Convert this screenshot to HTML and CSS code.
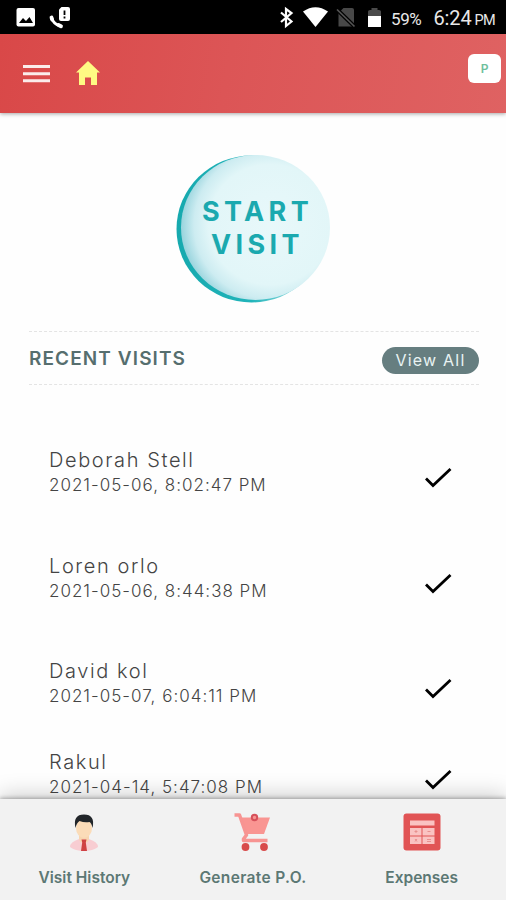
FILE: index.html
```html
<!DOCTYPE html>
<html lang="en">
<head>
    <meta charset="UTF-8">
    <title>Visits</title>
    <link rel="stylesheet" href="styles.css">
</head>
<body>
    <div class="status-bar">
        <svg class="status-icons" width="506" height="34" viewBox="0 0 506 34">
            <!-- picture -->
            <rect x="16.500" y="8" width="18.500" height="18.500" rx="2" fill="#fff"/>
            <path d="M19 23l4-5 3 3 3.500-4 3.500 6z" fill="#000"/>
            <!-- missed call -->
            <path d="M51.500 17.500c1 4 4.500 8 9 8.500" fill="none" stroke="#fff" stroke-width="3"/>
            <path d="M51.500 17.500l.6 2M58.500 25l2.500 1.300" fill="none" stroke="#fff" stroke-width="3.800" stroke-linecap="round"/>
            <path d="M61.500 7h6.500q2 0 2 2v10q0 2-2 2h-7q-2 0-2-2V9.500z" fill="#fff"/>
            <path d="M64.500 10.500v4.500m0 1.500v2" stroke="#000" stroke-width="1.800"/>
            <!-- bluetooth -->
            <path d="M281 12.500l10.500 9-5.500 4.500V9l5.500 4-10.500 9" fill="none" stroke="#fff" stroke-width="2.200"/>
            <!-- wifi -->
            <path d="M303 11.500q12.500-8.500 25 0L315.500 27z" fill="#fff"/>
            <!-- no sim -->
            <path d="M343.500 8H352q2 0 2 2v16.500h-15.500V13z" fill="#484848"/>
            <path d="M336.500 9l18.500 18" stroke="#000" stroke-width="4"/>
            <path d="M337 9.500l17.500 17" stroke="#555" stroke-width="1.700"/>
            <!-- battery -->
            <path d="M368 16v-4.500q0-1.500 2-1.500h1.500V8h6v2h1.500q2 0 2 1.500V16z" fill="#4a4a4a"/>
            <path d="M368 16h13v11h-13z" fill="#fff"/>
        </svg>
        <span class="battery">59%</span>
        <span class="clock">6:24</span>
        <span class="meridiem">PM</span>
    </div>

    <header class="header">
        <svg class="menu-icon" width="27" height="20" viewBox="0 0 27 20">
            <path d="M0 2.600h27M0 9.700h27M0 16.800h27" stroke="#fbeceb" stroke-width="3"/>
        </svg>
        <svg class="home-icon" width="24" height="24" viewBox="0 0 24 24">
            <path d="M12 0l12 11.500h-3V24h-6v-7.500H9V24H3V11.500H0z" fill="#fffa83"/>
        </svg>
        <div class="profile">P</div>
    </header>

    <main class="content">
        <button class="start-visit">
            <svg width="155" height="148" viewBox="0 0 155 148">
                <defs>
                    <linearGradient id="rim" x1="0" y1="0" x2="1" y2="0">
                        <stop offset="0" stop-color="#16a9ae"/>
                        <stop offset=".5" stop-color="#21b4ba"/>
                        <stop offset="1" stop-color="#dff5f7"/>
                    </linearGradient>
                    <radialGradient id="face" cx=".6" cy=".48" r=".61">
                        <stop offset="0" stop-color="#e8f8fa"/>
                        <stop offset=".68" stop-color="#e2f6f8"/>
                        <stop offset=".84" stop-color="#cdecf1"/>
                        <stop offset="1" stop-color="#92d1db"/>
                    </radialGradient>
                </defs>
                <ellipse cx="75.500" cy="74" rx="75" ry="73.500" fill="url(#rim)"/>
                <ellipse cx="79.500" cy="72.500" rx="74.500" ry="72.500" fill="url(#face)"/>
            </svg>
            <span class="start-text">START<br>VISIT</span>
        </button>

        <div class="recent">
            <h2>RECENT VISITS</h2>
            <button class="view-all">View All</button>
        </div>

        <div class="visits">
            <div class="visit">
                <div>
                    <div class="name">Deborah Stell</div>
                    <div class="date">2021-05-06, 8:02:47 PM</div>
                </div>
                <svg class="check" width="28" height="22" viewBox="0 0 28 22"><path d="M2 11.500l7 7L26.500 2" /></svg>
            </div>
            <div class="visit">
                <div>
                    <div class="name">Loren orlo</div>
                    <div class="date">2021-05-06, 8:44:38 PM</div>
                </div>
                <svg class="check" width="28" height="22" viewBox="0 0 28 22"><path d="M2 11.500l7 7L26.500 2" /></svg>
            </div>
            <div class="visit short">
                <div>
                    <div class="name">David kol</div>
                    <div class="date">2021-05-07, 6:04:11 PM</div>
                </div>
                <svg class="check" width="28" height="22" viewBox="0 0 28 22"><path d="M2 11.500l7 7L26.500 2" /></svg>
            </div>
            <div class="visit">
                <div>
                    <div class="name">Rakul</div>
                    <div class="date">2021-04-14, 5:47:08 PM</div>
                </div>
                <svg class="check" width="28" height="22" viewBox="0 0 28 22"><path d="M2 11.500l7 7L26.500 2" /></svg>
            </div>
        </div>
    </main>

    <nav class="bottom-nav">
        <div class="nav-item">
            <svg width="40" height="40" viewBox="0 0 40 40">
                <path d="M6 35q0-5 9-8h10q9 3 9 8-5 4-14 4T6 35z" fill="#f8cdd2"/>
                <path d="M15 21h10v6q-1 4-5 4t-5-4z" fill="#f8d5b0"/>
                <ellipse cx="20" cy="16" rx="8" ry="10" fill="#fbdcb8"/>
                <path d="M11.500 16Q8.500 2.500 20 2.500T28.500 16q-1-5-3-6-5 1-10-1-3 2-4 7z" fill="#22262a"/>
                <path d="M17.500 27.500h5l-.7 3L23 39h-6l1.200-8.500z" fill="#cf4144"/>
            </svg>
            <span>Visit History</span>
        </div>
        <div class="nav-item wide">
            <svg width="40" height="40" viewBox="0 0 40 40">
                <path d="M8 5.500h29L31 22H13z" fill="#f99592"/>
                <path d="M1.500 3h5l7 20-3 4v1.500h24" fill="none" stroke="#f79492" stroke-width="3.500" stroke-linejoin="round"/>
                <circle cx="21.500" cy="5.500" r="2.700" fill="#f79492" stroke="#d6505a" stroke-width="2"/>
                <circle cx="12.500" cy="35" r="3.900" fill="#d84b4b"/>
                <circle cx="31" cy="35" r="3.900" fill="#d84b4b"/>
            </svg>
            <span>Generate P.O.</span>
        </div>
        <div class="nav-item">
            <svg width="40" height="40" viewBox="0 0 40 40">
                <rect x="1.500" y="1.500" width="37" height="37" rx="3" fill="#e15455"/>
                <path d="M8 8.500h24.500v5H8zM8 16h11.500v7.500H8zm12.500 0h12v7.500h-12zM8 24.500h11.500V32H8zm12.500 0h12V32h-12z" fill="#fac3c2"/>
                <path d="M12.500 19.500h3m-1.500-1.500v3m11.500-1.500h3m-15.500 7.500l2 2.500m0-2.500l-2 2.500m12-2h4m-4 2h4" stroke="#e8918f" stroke-width="1"/>
            </svg>
            <span>Expenses</span>
        </div>
    </nav>
</body>
</html>
```

FILE: styles.css
```css
* {
    box-sizing: border-box;
}
body {
    margin: 0;
    height: 900px;
    display: flex;
    flex-direction: column;
    overflow: hidden;
    background-color: #fefefe;
    color: #444;
    font-family: Inter, "Open Sans", sans-serif;
}
button {
    border: none;
    padding: 0;
    background: none;
    font-family: inherit;
}
.status-bar {
    position: relative;
    flex: none;
    display: flex;
    justify-content: flex-end;
    align-items: baseline;
    height: 34px;
    padding-right: 11px;
    background-color: #000;
    color: #e8e8e8;
    font-family: Roboto, sans-serif;
    line-height: 37px;
}
.status-icons {
    position: absolute;
    top: 0;
    left: 0;
}
.battery {
    margin-right: 12px;
    font-size: 17px;
    letter-spacing: -0.4px;
}
.clock {
    margin-right: 3px;
    font-size: 20px;
    letter-spacing: -0.1px;
}
.meridiem {
    font-size: 14.5px;
    letter-spacing: -0.7px;
}
.header {
    flex: none;
    display: flex;
    align-items: center;
    height: 79px;
    padding: 0 5px 0 23px;
    background: linear-gradient(100deg, #d94848, #dc5556 45%, #df6262);
    box-shadow: 0 1px 4px rgba(0, 0, 0, 0.35);
    z-index: 1;
}
.home-icon {
    margin: -2px 0 0 26px;
}
.profile {
    width: 33px;
    height: 29px;
    margin-left: auto;
    margin-bottom: 11px;
    border-radius: 6px;
    background-color: #fff;
    color: #6fbf9c;
    font-size: 12px;
    font-weight: 600;
    line-height: 29px;
    text-align: center;
}
.content {
    flex: 1;
    min-height: 0;
    overflow: hidden;
    padding: 42px 27px 0 29px;
}
.start-visit {
    display: grid;
    width: 155px;
    height: 148px;
    margin: 0 0 28px 147px;
}
.start-visit svg,
.start-text {
    grid-area: 1 / 1;
}
.start-text {
    padding: 40px 0 0 8px;
    color: #1ba9af;
    font-size: 27px;
    font-weight: 700;
    line-height: 33px;
    letter-spacing: 4.4px;
}
.recent {
    display: flex;
    justify-content: space-between;
    align-items: center;
    height: 54px;
    border-top: 1px dashed #e4e4e4;
    border-bottom: 1px dashed #e4e4e4;
}
.recent h2 {
    color: #566e6e;
    margin: 0;
    font-size: 19px;
    font-weight: 600;
    letter-spacing: 1.1px;
}
.view-all {
    width: 97px;
    height: 27px;
    margin-top: 4px;
    border-radius: 14px;
    background-color: #667e80;
    color: #e9f3f3;
    font-size: 16px;
    letter-spacing: 1.2px;
}
.visits {
    padding: 63px 27px 0 20px;
}
.visit {
    display: flex;
    justify-content: space-between;
    height: 105.5px;
}
.visit.short {
    height: 91px;
}
.name {
    font-size: 20px;
    font-weight: 300;
    line-height: 25px;
    letter-spacing: 1.6px;
}
.date {
    font-size: 17px;
    font-weight: 300;
    line-height: 24px;
    letter-spacing: 1px;
}
.check {
    margin-top: 19px;
    fill: none;
    stroke: #000;
    stroke-width: 2.8px;
}
.bottom-nav {
    flex: none;
    display: grid;
    grid-template-columns: repeat(3, 1fr);
    height: 101px;
    padding-top: 13px;
    background-color: #f2f2f2;
    box-shadow: 0 -1px 4px rgba(0, 0, 0, 0.3), 0 -5px 20px rgba(0, 0, 0, 0.18);
    z-index: 1;
}
.nav-item {
    display: flex;
    flex-direction: column;
    align-items: center;
    color: #5c7874;
    font-size: 15.5px;
    font-weight: 600;
}
.nav-item span {
    margin-top: 15px;
    line-height: 22px;
}
.nav-item.wide {
    letter-spacing: 0.35px;
}
```
